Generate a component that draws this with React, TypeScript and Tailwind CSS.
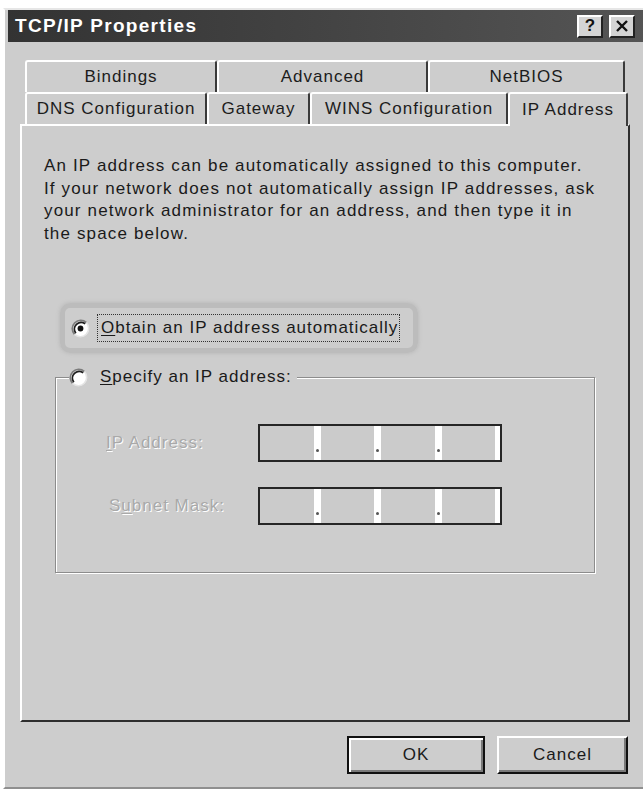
import { Fragment } from "react";

const font = "font-['Liberation_Sans',Arial,sans-serif]";

function Radio({ checked }: { checked?: boolean }) {
    return (
        <svg width="19" height="19" viewBox="0 0 17 17" className="shrink-0">
            <circle cx="8.5" cy="8.5" r="7.5" fill="#fff" />
            <path d="M3.2 13.8 A7.5 7.5 0 0 1 13.8 3.2" fill="none" stroke="#7c7c7c" strokeWidth="1.6" />
            <path d="M4.3 12.7 A6 6 0 0 1 12.7 4.3" fill="none" stroke="#1e1e1e" strokeWidth="1.6" />
            <path d="M13.8 3.2 A7.5 7.5 0 0 1 3.2 13.8" fill="none" stroke="#e4e4e4" strokeWidth="1.4" />
            {checked && <circle cx="8.5" cy="8.5" r="2.6" fill="#111" />}
        </svg>
    );
}

function IpField() {
    return (
        <div className="flex h-[38px] w-[244px] border-2 border-[#262626] bg-[#cbcbcb]">
            {[0, 1, 2].map((i) => (
                <Fragment key={i}>
                    <div className="flex-1" />
                    <div className="flex w-[7px] flex-col items-center justify-end bg-white pb-[8px]">
                        <div className="h-[3px] w-[3px] rounded-full bg-[#555]" />
                    </div>
                </Fragment>
            ))}
            <div className="flex-1" />
            <div className="w-[5px] bg-white" />
        </div>
    );
}

function Tab({ label, w, active }: { label: string; w: string; active?: boolean }) {
    return (
        <div
            className={`${w} ${active ? "relative z-10 -mb-[2px] h-[34px]" : "h-[32px]"} flex items-center justify-center rounded-t-[3px] border-l-2 border-t-2 border-r-2 border-l-white border-t-white border-r-[#3a3a3a] bg-[#cdcdcd] text-[17px] tracking-[1px] text-[#1c1c1c]`}
        >
            {label}
        </div>
    );
}

export default function App() {
    return (
        <div className={`h-[796px] w-[643px] overflow-hidden bg-white pt-[8px] pl-[3px] ${font}`}>
            <div className="h-[781px] w-[660px] border-l-2 border-t-2 border-b-2 border-l-white border-t-[#e6e6e6] border-b-[#8f8f8f] bg-[#cdcdcd] px-[3px]">
                {/* title bar */}
                <div className="flex h-[32px] w-[640px] items-center justify-between bg-gradient-to-r from-[#333333] to-[#555555] pl-[7px] pr-[13px]">
                    <span className="text-[19px] font-bold tracking-[1.3px] text-white">TCP/IP Properties</span>
                    <div className="flex gap-[6px]">
                        <div className="flex h-[23px] w-[26px] items-center justify-center border-l-2 border-t-2 border-r-2 border-b-2 border-l-white border-t-white border-r-[#222] border-b-[#222] bg-[#d4d4d4] text-[17px] font-bold text-[#111]">
                            ?
                        </div>
                        <div className="flex h-[23px] w-[26px] items-center justify-center border-l-2 border-t-2 border-r-2 border-b-2 border-l-white border-t-white border-r-[#222] border-b-[#222] bg-[#d4d4d4]">
                            <svg width="14" height="12" viewBox="0 0 14 12">
                                <path d="M2 1 L12 11 M12 1 L2 11" stroke="#111" strokeWidth="2.4" />
                            </svg>
                        </div>
                    </div>
                </div>

                <div className="ml-[12px] mt-[18px] w-[610px]">
                    {/* tabs */}
                    <div className="ml-[5px] flex">
                        <Tab label="Bindings" w="w-[192px]" />
                        <Tab label="Advanced" w="w-[211px]" />
                        <Tab label="NetBIOS" w="w-[197px]" />
                    </div>
                    <div className="ml-[5px] flex items-end">
                        <Tab label="DNS Configuration" w="w-[182px]" />
                        <Tab label="Gateway" w="w-[103px]" />
                        <Tab label="WINS Configuration" w="w-[198px]" />
                        <Tab label="IP Address" w="w-[120px]" active />
                    </div>

                    {/* panel */}
                    <div className="h-[598px] border-l-2 border-t-2 border-r-2 border-b-2 border-l-white border-t-white border-r-[#2e2e2e] border-b-[#2e2e2e] pl-[22px] pt-[29px] text-[17px] tracking-[1px] text-[#1a1a1a]">
                        <p className="leading-[22.5px] tracking-[1.15px]">
                            An IP address can be automatically assigned to this computer.
                            <br />
                            If your network does not automatically assign IP addresses, ask
                            <br />
                            your network administrator for an address, and then type it in
                            <br />
                            the space below.
                        </p>

                        <div className="ml-[16px] mt-[58px] flex h-[50px] w-[358px] items-center gap-[7px] rounded-[10px] border-[5px] border-[#bcbcbc] pl-[6px] shadow-[0_0_4px_#b4b4b4]">
                            <Radio checked />
                            <span className="flex h-[28px] items-center border border-dotted border-[#333] pl-[3px] pr-[1px]">
                                <span className="underline underline-offset-2">O</span>btain an IP address automatically
                            </span>
                        </div>

                        <fieldset className="ml-[11px] mt-[13px] w-[540px] border border-[#8c8c8c] shadow-[1px_1px_0_#fff,inset_1px_1px_0_#fff]">
                            <legend className="ml-[13px] flex items-center gap-[12px] bg-[#cdcdcd] pr-[5px] leading-[22px]">
                                <Radio />
                                <span>
                                    <span className="underline underline-offset-2">S</span>pecify an IP address:
                                </span>
                            </legend>
                            <div className="flex flex-col gap-[25px] pb-[47px] pt-[36px]">
                                <div className="flex items-center">
                                    <span className="w-[202px] pl-[50px] text-[#a9a9a9] [text-shadow:1px_1px_0_#fff]">
                                        <span className="underline underline-offset-2">I</span>P Address:
                                    </span>
                                    <IpField />
                                </div>
                                <div className="flex items-center">
                                    <span className="w-[202px] pl-[53px] text-[#a9a9a9] [text-shadow:1px_1px_0_#fff]">
                                        S<span className="underline underline-offset-2">u</span>bnet Mask:
                                    </span>
                                    <IpField />
                                </div>
                            </div>
                        </fieldset>
                    </div>

                    {/* buttons */}
                    <div className="mt-[14px] flex justify-end gap-[12px] pr-[2px] text-[17px] tracking-[1px] text-[#1a1a1a]">
                        <button className="flex h-[38px] w-[138px] items-center justify-center border-2 border-[#111] bg-[#cdcdcd] shadow-[inset_2px_2px_0_#fff,inset_-2px_-2px_0_#7a7a7a]">
                            OK
                        </button>
                        <button className="flex h-[38px] w-[131px] items-center justify-center border-l-2 border-t-2 border-r-2 border-b-2 border-l-white border-t-white border-r-[#111] border-b-[#111] bg-[#cdcdcd] shadow-[inset_-2px_-2px_0_#7a7a7a]">
                            Cancel
                        </button>
                    </div>
                </div>
            </div>
        </div>
    );
}
